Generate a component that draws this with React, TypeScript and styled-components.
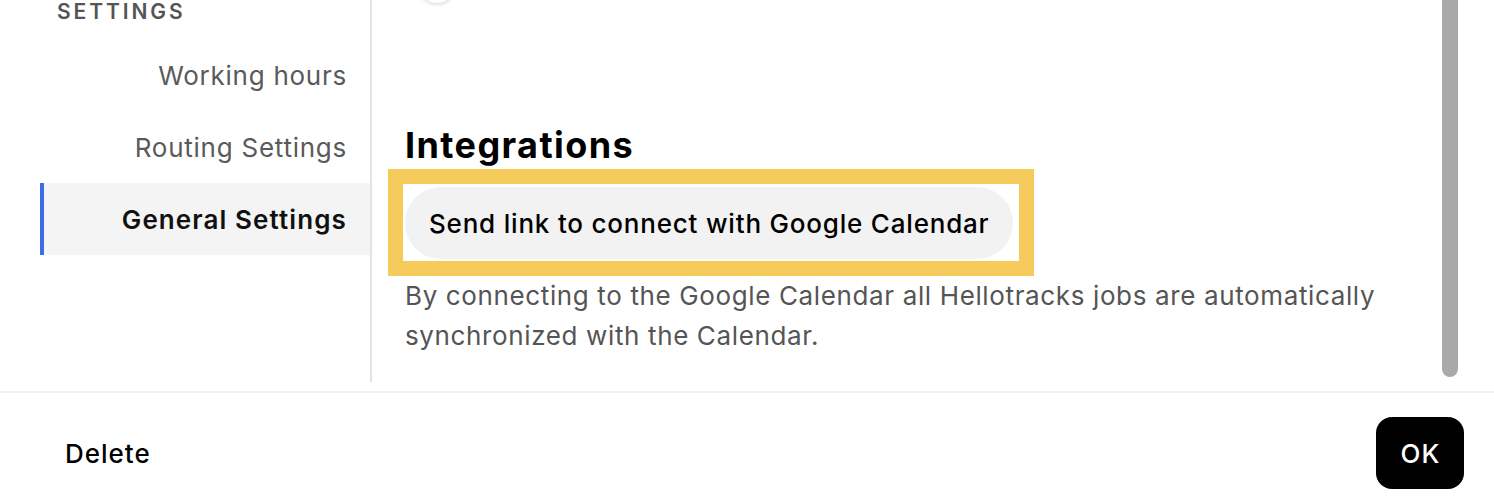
import * as React from 'react';
import styled, { createGlobalStyle } from 'styled-components';

const GlobalStyle = createGlobalStyle`
  html, body {
    margin: 0;
    padding: 0;
    background: #fff;
  }
  body {
    font-family: Inter, "Noto Sans", "Liberation Sans", sans-serif;
    -webkit-font-smoothing: antialiased;
  }
`;

const Page = styled.div`
  display: flex;
  flex-direction: column;
  width: 1494px;
  height: 504px;
  overflow: hidden;
`;

const Body = styled.div`
  display: flex;
  height: 391px;
  border-bottom: 2px solid #f2f2f2;
`;

const Sidebar = styled.nav`
  align-self: flex-start;
  width: 330px;
  height: 382px;
  margin-left: 40px;
  border-right: 2px solid #e3e3e3;
  display: flex;
  flex-direction: column;
`;

const SectionTitle = styled.div`
  height: 24px;
  line-height: 24px;
  margin-bottom: 15px;
  padding-left: 17px;
  font-size: 21px;
  font-weight: 600;
  letter-spacing: 2.9px;
  color: #555;
  text-transform: uppercase;
`;

const NavItem = styled.div<{ $active?: boolean }>`
  height: 72px;
  display: flex;
  align-items: center;
  justify-content: flex-end;
  padding-right: 23px;
  font-size: 26px;
  letter-spacing: ${p => (p.$active ? '1.1px' : '0.75px')};
  font-weight: ${p => (p.$active ? 600 : 400)};
  color: ${p => (p.$active ? '#111' : '#5a5a5a')};
  background: ${p => (p.$active ? '#f4f4f4' : 'transparent')};
  border-left: 4px solid ${p => (p.$active ? '#3b6de8' : 'transparent')};
`;

const Content = styled.main`
  flex: 1;
  padding-left: 33px;
  display: flex;
  flex-direction: column;
  align-items: flex-start;
`;

// bottom of a toggle knob that has scrolled above the top edge
const Knob = styled.div`
  width: 36px;
  height: 36px;
  margin-top: -33px;
  margin-left: 14px;
  border-radius: 50%;
  background: #fff;
  box-shadow: 0 1px 4px rgba(0, 0, 0, 0.18);
`;

const Heading = styled.h2`
  margin: 120px 0 0;
  font-size: 36px;
  line-height: 44px;
  font-weight: 700;
  color: #000;
  letter-spacing: 1.4px;
`;

const Highlight = styled.div`
  margin: 2px 0 0 -17px;
  border: 15px solid #f5cb5c;
  padding: 3px 6px 2px 2px;
  background: #fff;
`;

const PillButton = styled.button`
  height: 72px;
  padding: 0 24px;
  border: none;
  border-radius: 36px;
  background: #f2f2f2;
  font-family: inherit;
  font-size: 26px;
  font-weight: 500;
  letter-spacing: 0.8px;
  color: #000;
  cursor: pointer;
`;

const Description = styled.p`
  margin: 0;
  max-width: 1000px;
  font-size: 26px;
  line-height: 40px;
  letter-spacing: 0.63px;
  color: #555;
`;

const ScrollRail = styled.div`
  width: 16px;
  margin-right: 36px;
`;

const ScrollThumb = styled.div`
  height: 377px;
  background: #a9a9a9;
  border-radius: 0 0 8px 8px;
`;

const Footer = styled.footer`
  flex: 1;
  display: flex;
  align-items: center;
  justify-content: space-between;
  padding: 9px 30px 0 65px;
`;

const TextButton = styled.button`
  border: none;
  background: none;
  padding: 0;
  font-family: inherit;
  font-size: 26px;
  font-weight: 500;
  letter-spacing: 1px;
  color: #000;
  cursor: pointer;
`;

const PrimaryButton = styled.button`
  width: 88px;
  height: 72px;
  border: none;
  border-radius: 16px;
  background: #000;
  color: #fff;
  font-family: inherit;
  font-size: 26px;
  font-weight: 500;
  letter-spacing: 1px;
  text-indent: 1px;
  cursor: pointer;
`;

const navItems = ['Working hours', 'Routing Settings', 'General Settings'];

export default function App() {
  const active = 'General Settings';
  return (
    <Page>
      <GlobalStyle />
      <Body>
        <Sidebar>
          <SectionTitle>Settings</SectionTitle>
          {navItems.map(item => (
            <NavItem key={item} $active={item === active}>
              {item}
            </NavItem>
          ))}
        </Sidebar>
        <Content>
          <Knob />
          <Heading>Integrations</Heading>
          <Highlight>
            <PillButton>Send link to connect with Google Calendar</PillButton>
          </Highlight>
          <Description>
            By connecting to the Google Calendar all Hellotracks jobs are automatically synchronized with the
            Calendar.
          </Description>
        </Content>
        <ScrollRail>
          <ScrollThumb />
        </ScrollRail>
      </Body>
      <Footer>
        <TextButton>Delete</TextButton>
        <PrimaryButton>OK</PrimaryButton>
      </Footer>
    </Page>
  );
}
